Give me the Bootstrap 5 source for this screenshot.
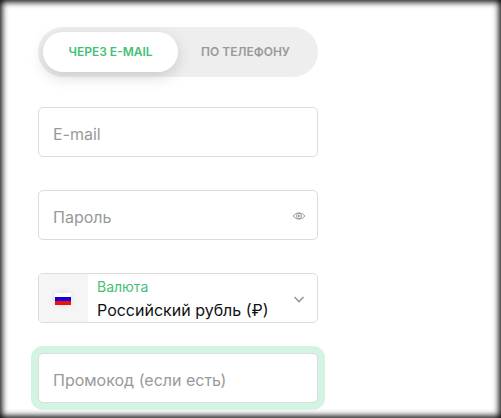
<!DOCTYPE html>
<html lang="ru">
<head>
<meta charset="utf-8">
<meta name="viewport" content="width=device-width, initial-scale=1">
<title>Регистрация</title>
<link href="https://cdn.jsdelivr.net/npm/bootstrap@5.3.0/dist/css/bootstrap.min.css" rel="stylesheet">
<style>
  body { font-family: Inter, "Noto Sans", sans-serif; font-size: 16px; background: #fff; }
  .signup-frame { min-height: 100vh; padding: 27px 38px 15px; box-shadow: inset 0 0 6px 2px #000; }
  .signup-form { max-width: 280px; }
  .mode-switch { height: 50px; padding: 5px; background: #eee; margin-bottom: 30px; }
  .mode-btn { border: 0; background: none; color: #999; font-size: 12px; line-height: 16px; font-weight: 600; border-radius: 20px; padding: 0; }
  .mode-btn.is-active { background: #fff; color: #45bf75; box-shadow: 0 5px 15px rgba(0, 0, 0, .15); }
  .field-gap { margin-bottom: 33px; }
  .field-gap-sm { margin-bottom: 30px; }
  .field-input.form-control { height: 50px; padding: 6px 14px 2px; border: 1px solid #dcdcdc; border-radius: 5px; font-size: 16px; color: #111; }
  .field-input::placeholder { color: #999; opacity: 1; }
  .has-eye .field-input { padding-right: 40px; }
  .eye-btn { right: 12px; top: 19px; border: 0; padding: 0; background: none; line-height: 0; }
  .currency-box { height: 50px; border: 1px solid #dcdcdc; border-radius: 5px; }
  .flag-cell { width: 49px; padding: 2px 1px 0 0; background: #f5f5f5; }
  .flag-cell svg { box-shadow: 0 0 6px rgba(0, 0, 0, .1); }
  .currency-text { padding: 2px 9px 0; }
  .currency-text label { color: #45bf75; font-size: 14px; line-height: 22px; }
  .currency-text select { appearance: none; border: 0; background: none; padding: 0; font-size: 16px; line-height: 24px; color: #111; outline: 0; }
  .chevron { right: 12px; top: 19px; pointer-events: none; }
  .promo-input.field-input { box-shadow: 0 0 0 7px #d3f4e3; }
</style>
</head>
<body>
<main class="signup-frame">
  <form class="signup-form w-100">
    <div class="mode-switch d-flex rounded-pill" role="group" aria-label="Способ регистрации">
      <button type="button" class="mode-btn is-active w-50" aria-pressed="true">ЧЕРЕЗ E-MAIL</button>
      <button type="button" class="mode-btn w-50" aria-pressed="false">ПО ТЕЛЕФОНУ</button>
    </div>
    <div class="field-gap">
      <input type="email" class="form-control field-input" placeholder="E-mail" aria-label="E-mail">
    </div>
    <div class="field-gap has-eye position-relative">
      <input type="password" class="form-control field-input" placeholder="Пароль" aria-label="Пароль">
      <button type="button" class="eye-btn position-absolute" aria-label="Показать пароль">
        <svg width="14" height="14" viewBox="0 0 14 14" fill="none" stroke="#888" stroke-width=".8">
          <path d="M1 7Q7 .5 13 7Q7 13.500 1 7Z"/>
          <circle cx="7" cy="7" r="2.500"/>
          <circle cx="7" cy="7" r="1" fill="#888" stroke="none"/>
        </svg>
      </button>
    </div>
    <div class="currency-box field-gap-sm d-flex position-relative overflow-hidden">
      <div class="flag-cell d-flex align-items-center justify-content-center flex-shrink-0">
        <svg width="16" height="12" viewBox="0 0 16 12" shape-rendering="crispEdges" aria-hidden="true">
          <path fill="#fff" d="M0 0h16v4H0z"/><path fill="#1500d8" d="M0 4h16v4H0z"/><path fill="#ee0f0f" d="M0 8h16v4H0z"/>
        </svg>
      </div>
      <div class="currency-text d-flex flex-column flex-grow-1">
        <label for="currency">Валюта</label>
        <select id="currency" class="w-100"><option>Российский рубль (₽)</option></select>
      </div>
      <svg class="chevron position-absolute" width="12" height="12" viewBox="0 0 12 12" fill="none" stroke="#999" stroke-width="1.600" aria-hidden="true"><path d="M1.500 4L6 8.500L10.500 4"/></svg>
    </div>
    <input type="text" class="form-control field-input promo-input" placeholder="Промокод (если есть)" aria-label="Промокод (если есть)">
  </form>
</main>
<script src="https://cdn.jsdelivr.net/npm/bootstrap@5.3.0/dist/js/bootstrap.bundle.min.js"></script>
</body>
</html>
